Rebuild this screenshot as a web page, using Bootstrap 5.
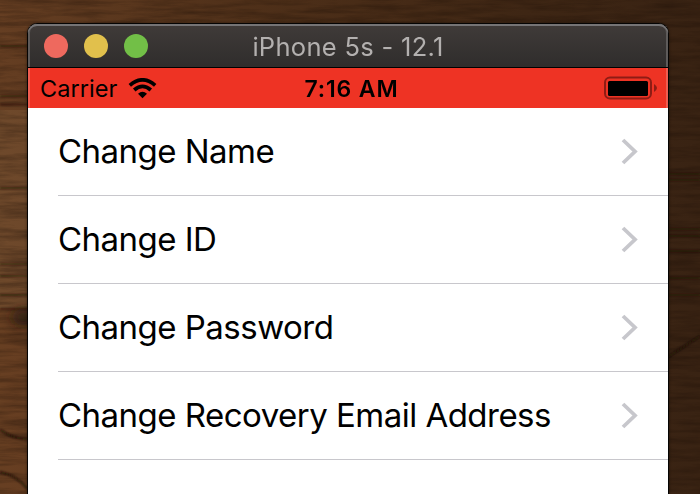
<!DOCTYPE html>
<html lang="en">
<head>
<meta charset="utf-8">
<title>iPhone 5s - 12.1</title>
<link href="https://cdn.jsdelivr.net/npm/bootstrap@5.3.0/dist/css/bootstrap.min.css" rel="stylesheet">
<style>
body{font-family:Inter,"Liberation Sans",sans-serif;background:#442b18;height:494px;color:#000}
.wood{z-index:0}
.sim{z-index:1;width:642px;margin:23px 0 0 27px;height:480px;border:1px solid #050403;border-bottom:0;border-radius:10px 10px 0 0;box-shadow:0 0 3px rgba(0,0,0,.45)}
.titlebar{height:44px;background:linear-gradient(#403b39,#2f2d2c);border-bottom:1px solid #000;box-shadow:inset 0 2px 0 #767475,inset 2px 0 0 #5e5b5a,inset -2px 0 0 #5e5b5a;border-radius:9px 9px 0 0;padding-left:16px}
.dot{width:24px;height:24px}
.dot-r{background:#ee695e}.dot-y{background:#e1c04c}.dot-g{background:#72bf47}
.title{left:0;right:0;top:7px;font-size:25.5px;line-height:32px;color:#b3b0af;letter-spacing:.3px}
.status{height:40px;background:#ee3324;box-shadow:inset 2px 0 0 #f05d50,inset -2px 0 0 #f05d50;padding:0 10px 0 12px;font-size:23.5px;line-height:40px}
.carrier{letter-spacing:.05px;padding-top:1px}
.wifi{margin:1px 0 0 10px}
.clock{left:0;right:0;top:1px;font-weight:600;font-size:23px;letter-spacing:.85px;padding-left:7px}
.rows .list-group-item{height:88px;margin-left:30px;padding:0 30px 0 0;border-color:#c8c7cc;border-width:0 0 1px!important;font-size:33px;letter-spacing:-.52px;color:#000}
</style>
<script src="https://cdn.jsdelivr.net/npm/bootstrap@5.3.0/dist/js/bootstrap.bundle.min.js"></script>
</head>
<body class="position-relative overflow-hidden m-0">
<svg class="wood position-absolute top-0 start-0" width="700" height="494" aria-hidden="true">
<defs>
<linearGradient id="base"><stop offset="0" stop-color="#653e22"/><stop offset=".35" stop-color="#4f3019"/><stop offset=".75" stop-color="#3e2614"/><stop offset="1" stop-color="#392313"/></linearGradient>
<filter id="grain" x="0" y="0" width="100%" height="100%" color-interpolation-filters="sRGB"><feTurbulence type="fractalNoise" baseFrequency=".02 .18" numOctaves="5" seed="8"/><feColorMatrix values="0 0 0 0 .1  0 0 0 0 .05  0 0 0 0 .02  1.800 0 0 0 -.65"/></filter>
<filter id="soft" x="0" y="0" width="700" height="494" filterUnits="userSpaceOnUse"><feGaussianBlur stdDeviation=".8"/></filter>
<filter id="haze" x="-50%" y="-50%" width="200%" height="200%"><feGaussianBlur stdDeviation="6"/></filter>
</defs>
<rect width="700" height="494" fill="url(#base)"/>
<rect y="110" width="28" height="198" fill="#7c5a3a" opacity=".4"/>
<rect y="308" width="28" height="186" fill="#693f22" opacity=".5"/>
<rect width="700" height="494" filter="url(#grain)" opacity=".4"/>
<g fill="none" stroke="#1b0c04" stroke-width="2" filter="url(#soft)">
<path d="M0 46H28M0 96H28M0 104.500H28M0 188H28M0 264H28M0 276H28M0 295H28" opacity=".6"/>
<path d="M668 174H700M668 180H700M668 229H700M668 236H700M668 251H700M668 278H700M668 295H700" opacity=".65"/>
<path d="M0 430C8 434 12 439 28 439M0 472C13 475 20 480 28 489M668 357L700 336" opacity=".8"/>
<path d="M0 309H28" opacity=".5"/>
</g>
<ellipse cx="25" cy="317" rx="14" ry="9" fill="#241307" opacity=".75" filter="url(#haze)"/>
</svg>
<main class="sim position-relative bg-white">
<header class="titlebar position-relative d-flex align-items-center gap-3">
<div class="dot dot-r rounded-circle"></div><div class="dot dot-y rounded-circle"></div><div class="dot dot-g rounded-circle"></div>
<div class="title position-absolute text-center">iPhone 5s - 12.1</div>
</header>
<div class="status position-relative d-flex align-items-center justify-content-between">
<div class="d-flex align-items-center"><span class="carrier">Carrier</span>
<svg class="wifi" width="31" height="22" viewBox="0 0 30 22" aria-label="Wi-Fi"><g fill="none" stroke="#000" stroke-width="3.700"><path d="M2.300 7.300Q15-3.600 27.700 7.300"/><path d="M6.700 12Q15 4.700 23.300 12"/></g><path d="M10.500 15.700Q15 12 19.500 15.700L15 20.300Z"/></svg></div>
<div class="clock position-absolute text-center">7:16 AM</div>
<svg width="54" height="24" viewBox="0 0 54 24" aria-label="Battery"><rect x="1" y="1.500" width="46" height="21" rx="5" fill="none" stroke="#8f1c14" stroke-width="2"/><rect x="4" y="5" width="40" height="15" rx="1.500"/><path d="M50 8Q53 10 53 12T50 16Z" fill="#8f1c14"/></svg>
</div>
<div class="rows list-group list-group-flush">
<div class="list-group-item bg-white d-flex align-items-center justify-content-between"><span>Change Name</span><svg width="17" height="27" viewBox="0 0 17 27"><path d="M2 2L14 13.500L2 25" fill="none" stroke="#c7c7cc" stroke-width="3.800"/></svg></div>
<div class="list-group-item bg-white d-flex align-items-center justify-content-between"><span>Change ID</span><svg width="17" height="27" viewBox="0 0 17 27"><path d="M2 2L14 13.500L2 25" fill="none" stroke="#c7c7cc" stroke-width="3.800"/></svg></div>
<div class="list-group-item bg-white d-flex align-items-center justify-content-between"><span>Change Password</span><svg width="17" height="27" viewBox="0 0 17 27"><path d="M2 2L14 13.500L2 25" fill="none" stroke="#c7c7cc" stroke-width="3.800"/></svg></div>
<div class="list-group-item bg-white d-flex align-items-center justify-content-between"><span>Change Recovery Email Address</span><svg width="17" height="27" viewBox="0 0 17 27"><path d="M2 2L14 13.500L2 25" fill="none" stroke="#c7c7cc" stroke-width="3.800"/></svg></div>
</div>
</main>
</body>
</html>
